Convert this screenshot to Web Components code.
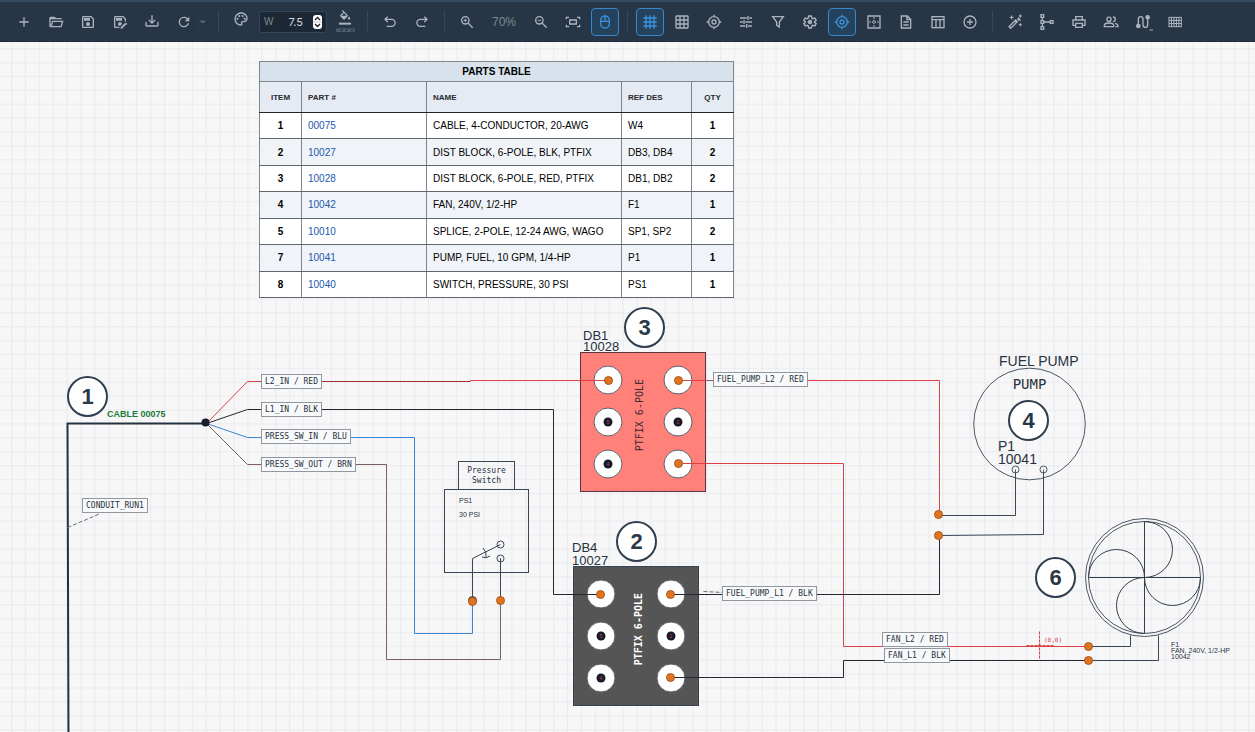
<!DOCTYPE html>
<html lang="en">
<head>
<meta charset="utf-8">
<title>Wiring diagram editor</title>
<style>
  html, body { height: 100%; margin: 0; }
  body { font-family: "Liberation Sans", Arial, sans-serif; background: #f7f7f8; overflow: hidden; }
</style>
</head>
<body>
<diagram-app></diagram-app>

<template id="diagram-app">
  <style>
    :host { display: flex; flex-direction: column; height: 100%; }
  </style>
  <app-toolbar></app-toolbar>
  <diagram-canvas></diagram-canvas>
</template>

<template id="app-toolbar">
  <style>
    :host { display: block; flex: none; }
    nav { display: flex; align-items: center; gap: 4px; height: 39px; padding-left: 10px;
      background: #263646; border-top: 2px solid #34495e; border-bottom: 1px solid #1d2a38; }
    .split { display: flex; align-items: center; }
    .zoom { width: 38px; text-align: center; font-size: 12px; line-height: 16px; color: #7f8a92; }
  </style>
  <nav aria-label="Tools">
    <tool-button icon="plus" label="New"></tool-button>
    <tool-button icon="folder" label="Open"></tool-button>
    <tool-button icon="save" label="Save"></tool-button>
    <tool-button icon="saveEdit" label="Save as"></tool-button>
    <tool-button icon="download" label="Download"></tool-button>
    <div class="split">
      <tool-button icon="refresh" label="Reload"></tool-button>
      <tool-button narrow icon="caret" label="Reload options"></tool-button>
    </div>
    <tool-divider></tool-divider>
    <tool-button raised icon="palette" label="Line colour"></tool-button>
    <width-field></width-field>
    <tool-button icon="fill" label="Fill colour"></tool-button>
    <tool-divider></tool-divider>
    <tool-button icon="undo" label="Undo"></tool-button>
    <tool-button icon="redo" label="Redo"></tool-button>
    <tool-divider></tool-divider>
    <tool-button icon="zoomIn" label="Zoom in"></tool-button>
    <span class="zoom">70%</span>
    <tool-button icon="zoomOut" label="Zoom out"></tool-button>
    <tool-button icon="fit" label="Fit to screen"></tool-button>
    <tool-button active icon="mouse" label="Mouse wheel zoom"></tool-button>
    <tool-divider></tool-divider>
    <tool-button active icon="grid" label="Show grid"></tool-button>
    <tool-button icon="table3" label="Snap to grid"></tool-button>
    <tool-button icon="target" label="Centre view"></tool-button>
    <tool-button icon="tune" label="Options"></tool-button>
    <tool-button icon="filter" label="Filter"></tool-button>
    <tool-button icon="cog" label="Settings"></tool-button>
    <tool-button active icon="target" label="Show origin"></tool-button>
    <tool-button icon="borderIn" label="Page borders"></tool-button>
    <tool-button icon="file" label="Notes"></tool-button>
    <tool-button icon="layout" label="Parts table"></tool-button>
    <tool-button icon="plusCircle" label="Add balloon"></tool-button>
    <tool-divider></tool-divider>
    <tool-button icon="wand" label="Auto arrange"></tool-button>
    <tool-button icon="tree" label="Hierarchy"></tool-button>
    <tool-button icon="printer" label="Print"></tool-button>
    <tool-button icon="people" label="Share"></tool-button>
    <tool-button icon="route" label="Routing"></tool-button>
    <tool-button icon="table5" label="Pin table"></tool-button>
  </nav>
</template>

<template id="tool-divider">
  <style>:host { display: block; width: 1px; height: 22px; margin: 0 4px; background: #364758; }</style>
</template>

<template id="tool-button">
  <style>
    :host { display: block; }
    button { display: flex; align-items: center; justify-content: center; box-sizing: border-box; width: 28px; height: 28px;
      padding: 0; border: 1px solid transparent; border-radius: 4px; background: none; color: #acb3c0; }
    svg { display: block; flex: none; width: 16px; height: 16px; overflow: visible; fill: none; stroke: currentColor; stroke-width: 2; }
    :host([active]) button { color: #3d92da; background: #24425c; border-color: #3a86c6; }
    :host([narrow]) button { width: 12px; color: #5f6e7d; border-left-color: #2b3b4b; border-radius: 0; height: 22px; }
    :host([raised]) button { align-items: flex-start; padding-top: 2px; }
  </style>
  <button type="button"><svg viewBox="0 0 24 24" aria-hidden="true"></svg></button>
</template>

<template id="width-field">
  <style>
    :host { display: block; }
    div { display: flex; align-items: center; box-sizing: border-box; width: 68px; height: 22px; padding: 0 4px;
      background: #1c2835; border: 1px solid #34475a; border-radius: 3px; }
    label { font-size: 10px; color: #7f8a92; }
    input { flex: 1; min-width: 0; margin: 0; padding: 0 10px 0 0; border: 0; background: none; color: #d3d9df; text-align: right;
      font: 11px Inter, sans-serif; appearance: textfield; outline: none; }
    input::-webkit-inner-spin-button { display: none; }
    svg { display: block; width: 9px; height: 14px; }
  </style>
  <div>
    <label for="w">W</label>
    <input id="w" type="number" step="0.5" value="7.5">
    <svg viewBox="0 0 9 14" aria-hidden="true"><rect width="9" height="14" rx="3" fill="#fff"/><path d="M0 7H9" stroke="#c8c8c8"/><path d="M2 5L4.500 2.500L7 5M2 9L4.500 11.500L7 9" fill="none" stroke="#222" stroke-width="1.400"/></svg>
  </div>
</template>

<template id="diagram-canvas">
  <style>
    :host { display: block; position: relative; flex: 1; min-height: 0; overflow: hidden; }
    .world { position: absolute; left: 0; top: -42px; width: 100%; height: calc(100% + 42px); }
    .world > * { position: absolute; }
    .world > svg { left: 0; top: 0; width: 100%; height: 100%; }
    svg { fill: none; }
    .k { stroke: #23282e; } .r { stroke: #dd4145; } .b { stroke: #3a86d2; } .n { stroke: #7d5f5b; } .s { stroke: #3a4654; }
    .dash { stroke: #666d75; stroke-dasharray: 4 2; }
  </style>
  <div class="world">
    <svg aria-hidden="true">
      <defs>
        <pattern id="grid" width="20" height="20" patternUnits="userSpaceOnUse" patternTransform="translate(11 48) scale(0.695)">
          <path d="M0 1H20M1 0V20" stroke="#e9eaef" stroke-width="1.500"/>
        </pattern>
      </defs>
      <rect width="100%" height="100%" fill="url(#grid)"/>
    </svg>

    <parts-table style="left:259px;top:61px"></parts-table>

    <pressure-switch style="left:444px;top:461px"></pressure-switch>
    <fuel-pump style="left:973px;top:354px"></fuel-pump>
    <fan-symbol style="left:1084px;top:517px"></fan-symbol>
    <dist-block colour="#ff8179" edge="#5c3540" ink="#3a2a33" style="left:580px;top:352px"></dist-block>
    <dist-block colour="#555555" edge="#344252" ink="#ffffff" heavy style="left:573px;top:566px"></dist-block>

    <svg aria-hidden="true">
      <g transform="translate(0.5 0.5)">
        <path d="M68 740L67 423H206" stroke="#233240" stroke-width="2"/>
        <path class="r" d="M206 423L247 381H470V380H608M678 380H939V515M678 463H843V646H1089"/>
        <path d="M322 381H470" stroke="#8d2f35" stroke-dasharray="3 1"/>
        <path class="k" d="M206 423L247 409H553V594H601M670 594H939V535M670 677H843V660H1089"/>
        <path class="b" d="M206 423L247 437H414V633H472V601"/>
        <path class="n" d="M206 423L247 464H386V659H500V601"/>
        <path class="s" d="M939 515H1015V473M939 535L1043 534V473M1089 646H1130V635M1089 660H1158V635"/>
        <path class="dash" d="M67 527L100 513M703 591L722 592M707 380H713"/>
        <circle cx="205" cy="422" r="4" fill="#171d2b"/>
        <g stroke="#dd4145"><path stroke-dasharray="3 1" d="M1039 631V658M1026 645H1053"/><circle cx="1039" cy="645" r="1" fill="#dd4145"/></g>
        <circle cx="472" cy="600" r="4" fill="#555" stroke="#444"/>
        <g fill="#e1741f" stroke="#a95722">
          <circle cx="608" cy="380" r="4"/><circle cx="678" cy="380" r="4"/><circle cx="678" cy="463" r="4"/>
          <circle cx="600" cy="594" r="4"/><circle cx="670" cy="594" r="4"/><circle cx="670" cy="677" r="4"/>
          <circle cx="472" cy="601" r="4"/><circle cx="500" cy="600" r="4"/>
          <circle cx="938" cy="514" r="4"/><circle cx="938" cy="535" r="4"/>
          <circle cx="1088" cy="646" r="4"/><circle cx="1088" cy="660" r="4"/>
        </g>
      </g>
    </svg>

    <wire-label style="left:261px;top:374px">L2_IN / RED</wire-label>
    <wire-label style="left:261px;top:402px">L1_IN / BLK</wire-label>
    <wire-label style="left:261px;top:429px">PRESS_SW_IN / BLU</wire-label>
    <wire-label style="left:261px;top:457px">PRESS_SW_OUT / BRN</wire-label>
    <wire-label style="left:82px;top:498px">CONDUIT_RUN1</wire-label>
    <wire-label style="left:713px;top:372px">FUEL_PUMP_L2 / RED</wire-label>
    <wire-label style="left:722px;top:586px">FUEL_PUMP_L1 / BLK</wire-label>
    <wire-label style="left:882px;top:632px">FAN_L2 / RED</wire-label>
    <wire-label style="left:884px;top:648px">FAN_L1 / BLK</wire-label>

    <note-text style="left:107px;top:408px;--size:9px;--line:12px;--ink:#1c7a38;--weight:700">CABLE 00075</note-text>
    <note-text style="left:583px;top:330px;--line:11px">DB1<br>10028</note-text>
    <note-text style="left:572px;top:541px">DB4<br>10027</note-text>
    <note-text style="left:999px;top:354px;--size:14px;--line:14px">FUEL PUMP</note-text>
    <note-text style="left:998px;top:440px;--size:14px;--line:13px">P1<br>10041</note-text>
    <note-text style="left:1171px;top:642px;--size:7px;--line:6px">F1<br>FAN, 240V, 1/2-HP<br>10042</note-text>
    <note-text style="left:1044px;top:636px;--size:6px;--line:8px;--ink:#dd4145;--face:'DejaVu Sans Mono',monospace">(0,0)</note-text>

    <item-balloon style="left:67px;top:376px">1</item-balloon>
    <item-balloon style="left:624px;top:307px">3</item-balloon>
    <item-balloon style="left:616px;top:521px">2</item-balloon>
    <item-balloon style="left:1008px;top:400px">4</item-balloon>
    <item-balloon style="left:1035px;top:557px">6</item-balloon>
  </div>
</template>

<template id="parts-table">
  <style>
    :host { display: block; }
    table { border-collapse: collapse; table-layout: fixed; width: 474px; height: 237px; font-size: 10px; color: #000; background: #fff; }
    caption, th, td { box-sizing: border-box; }
    th, td { padding: 0 6px; border: 1px solid #80868d; text-align: left; }
    thead tr:first-child th { height: 20px; background: #d8e2ec; text-align: center; }
    thead tr + tr th { height: 31px; background: #e6eaf2; font-size: 8px; color: #252a30; border-bottom-color: #22262b; }
    tbody tr:nth-child(even) { background: #f0f4f8; }
    tbody td, tbody th { border-bottom-color: #60666d; }
    .c { text-align: center; font-weight: 700; }
    a { color: #2158ae; text-decoration: none; }
  </style>
  <table>
    <colgroup><col style="width:42px"><col style="width:125px"><col style="width:195px"><col style="width:70px"><col style="width:42px"></colgroup>
    <thead>
      <tr><th colspan="5" scope="colgroup">PARTS TABLE</th></tr>
      <tr><th class="c" scope="col">ITEM</th><th scope="col">PART #</th><th scope="col">NAME</th><th scope="col">REF DES</th><th class="c" scope="col">QTY</th></tr>
    </thead>
    <tbody></tbody>
  </table>
</template>

<template id="wire-label">
  <style>
    :host { display: block; box-sizing: border-box; padding: 0 3px; border: 1px solid #90979f; background: #f8f9fb;
      font: 8px/13px "DejaVu Sans Mono", monospace; color: #27323e; white-space: nowrap; }
  </style>
  <slot></slot>
</template>

<template id="note-text">
  <style>
    :host { display: block; font-family: var(--face, "Liberation Sans", Arial, sans-serif); font-size: var(--size, 13px);
      line-height: var(--line, 13px); font-weight: var(--weight, 400); color: var(--ink, #27323e); white-space: nowrap; }
  </style>
  <slot></slot>
</template>

<template id="item-balloon">
  <style>
    :host { display: flex; align-items: center; justify-content: center; box-sizing: border-box; width: 41px; height: 41px;
      border: 2px solid #2f3e4e; border-radius: 50%; background: #fff; color: #2a3746; font-size: 22px; line-height: 24px; font-weight: 700; }
  </style>
  <slot></slot>
</template>

<template id="dist-block">
  <style>
    :host { display: flex; align-items: center; justify-content: space-between; box-sizing: border-box; padding: 0 12px;
      width: 126px; height: 140px; border: 1px solid var(--edge); background: var(--fill); }
    svg { display: block; width: 30px; height: 114px; }
    text { font: 5px "Liberation Sans", sans-serif; fill: #d0404a; text-anchor: middle; }
    span { writing-mode: vertical-rl; transform: rotate(180deg); margin: 0 6px 14px 0; font: 10px/12px "DejaVu Sans Mono", monospace; color: var(--ink); }
    :host([heavy]) span { margin: 0 0 14px 6px; font-weight: 700; }
  </style>
  <svg class="left" viewBox="0 0 30 114"></svg>
  <span>PTFIX 6-POLE</span>
  <svg class="right" viewBox="0 0 30 114"></svg>
</template>

<template id="pressure-switch">
  <style>
    :host { display: flex; flex-direction: column; align-items: center; width: 85px; color: #27323e; }
    .cap { box-sizing: border-box; width: 57px; height: 29px; padding-top: 4px; border: 1px solid #3a4654; text-align: center;
      font: 8px/10px "DejaVu Sans Mono", monospace; }
    .body { box-sizing: border-box; width: 85px; height: 84px; margin-top: -1px; padding: 4px 14px; border: 1px solid #3a4654;
      font-size: 7px; line-height: 14px; }
    svg { display: block; width: 36px; height: 68px; margin-left: 10px; margin-top: 16px; fill: none; stroke: #3a4654; overflow: visible; }
  </style>
  <div class="cap">Pressure<br>Switch</div>
  <div class="body">PS1<br>30 PSI
    <svg viewBox="0 0 36 68" aria-hidden="true">
      <path d="M3.500 62V20.500L31.500 6.500M31.500 20V62M14 10Q18 14 17 19M13 19Q17 21 21 18"/>
      <circle cx="31.500" cy="6.500" r="3.500"/><circle cx="31.500" cy="20.500" r="3.500"/>
    </svg>
  </div>
</template>

<template id="fuel-pump">
  <style>
    :host { display: grid; width: 113px; }
    svg, span { grid-area: 1 / 1; }
    svg { display: block; width: 113px; height: 127px; fill: none; stroke: #4c5763; }
    span { padding-top: 21px; text-align: center; font: 14px/18px "DejaVu Sans Mono", monospace; color: #27323e; }
  </style>
  <svg viewBox="0 0 113 127" aria-hidden="true">
    <circle cx="56.500" cy="70" r="55.800"/><path d="M42.500 115.500V122M70.500 115.500V122"/>
    <circle cx="42.500" cy="115.500" r="3.500"/><circle cx="70.500" cy="115.500" r="3.500"/>
  </svg>
  <span>PUMP</span>
</template>

<template id="fan-symbol">
  <style>
    :host { display: block; }
    svg { display: block; width: 121px; height: 121px; fill: none; stroke: #4c5763; }
  </style>
  <svg viewBox="0 0 121 121" aria-hidden="true">
    <circle cx="60.500" cy="60.500" r="59"/><circle cx="60.500" cy="60.500" r="56"/>
    <path stroke="#34404d" d="M60.500 4.500V116.500M4.500 60.500H116.500M60.500 4.500a28 28 0 0 1 0 56a28 28 0 0 0 0 56M4.500 60.500a28 28 0 0 1 56 0a28 28 0 0 0 56 0"/>
  </svg>
</template>

<script>
const solid = d => `<path fill="currentColor" stroke="none" d="${d}"/>`;
const line = d => `<path d="${d}"/>`;
const lens = '<circle cx="9.500" cy="9.500" r="5.500"/><path d="M14 14L20.500 20.500"/>';

const ICONS = {
  plus: line('M12 5V19M5 12H19'),
  folder: solid('M6.1,10L4,18V8H21A2,2 0 0,0 19,6H12L10,4H4A2,2 0 0,0 2,6V18A2,2 0 0,0 4,20H19C19.9,20 20.7,19.4 20.9,18.5L23.2,10H6.1M19,18H6L7.6,12H20.6L19,18Z'),
  save: solid('M17 3H5C3.89 3 3 3.9 3 5V19C3 20.1 3.89 21 5 21H19C20.1 21 21 20.1 21 19V7L17 3M19 19H5V5H16.17L19 7.83V19M12 12C10.34 12 9 13.34 9 15S10.34 18 12 18 15 16.66 15 15 13.66 12 12 12M6 6H15V10H6V6Z'),
  saveEdit: solid('M11 19H5V5H16.17L19 7.83V11.5L21 11.2V7L17 3H5C3.89 3 3 3.9 3 5V19C3 20.1 3.89 21 5 21H11V19M6 6V10H15V6H6M12 12C10.34 12 9 13.34 9 15S10.34 18 12 18L15 15C15 13.34 13.66 12 12 12M19.07 13.88L13 19.94V22H15.06L21.12 15.93L19.07 13.88M22.7 14.58L21.42 13.3C21.2 13.1 20.9 13.1 20.65 13.3L19.65 14.3L21.7 16.3L22.7 15.3C22.89 15.1 22.89 14.78 22.7 14.58Z'),
  download: solid('M2 12H4V17H20V12H22V17C22 18.11 21.11 19 20 19H4C2.9 19 2 18.11 2 17V12M12 15L17.55 9.54L16.13 8.13L13 11.25V2H11V11.25L7.88 8.13L6.46 9.55L12 15Z'),
  refresh: solid('M17.65,6.35C16.2,4.9 14.21,4 12,4A8,8 0 0,0 4,12A8,8 0 0,0 12,20C15.73,20 18.84,17.45 19.73,14H17.65C16.83,16.33 14.61,18 12,18A6,6 0 0,1 6,12A6,6 0 0,1 12,6C13.66,6 15.14,6.69 16.22,7.78L13,11H20V4L17.65,6.35Z'),
  caret: solid('M5,10L10,14L15,10H5Z'),
  palette: solid('M12,22A10,10 0 0,1 2,12A10,10 0 0,1 12,2C17.5,2 22,6 22,11A6,6 0 0,1 16,17H14.2C13.9,17 13.7,17.2 13.7,17.5C13.7,17.6 13.8,17.7 13.8,17.8C14.2,18.3 14.4,18.9 14.4,19.5C14.5,20.9 13.4,22 12,22M12,4A8,8 0 0,0 4,12A8,8 0 0,0 12,20C12.3,20 12.5,19.8 12.5,19.5C12.5,19.3 12.4,19.2 12.4,19.1C12,18.6 11.8,18.1 11.8,17.5C11.8,16.1 12.9,15 14.3,15H16A4,4 0 0,0 20,11C20,7.1 16.4,4 12,4M6.500,10a1.500,1.500 0 1,0 0.010,0zM9.500,6a1.500,1.500 0 1,0 0.010,0zM14.500,6a1.500,1.500 0 1,0 0.010,0zM17.500,10a1.500,1.500 0 1,0 0.010,0z'),
  fill: '<g transform="translate(2 -6) scale(0.850)">' + solid('M19,11.5C19,11.5 17,13.67 17,15A2,2 0 0,0 19,17A2,2 0 0,0 21,15C21,13.67 19,11.5 19,11.5M5.21,10L10,5.21L14.79,10M16.56,8.94L7.62,0L6.21,1.41L8.59,3.79L3.44,8.94C2.85,9.5 2.85,10.47 3.44,11.06L8.94,16.56C9.23,16.85 9.62,17 10,17C10.38,17 10.77,16.85 11.06,16.56L16.56,11.06C17.15,10.47 17.15,9.5 16.56,8.94Z') + '</g><path d="M3 14.500H21" stroke-width="3"/><path d="M-1 22.500H26V26H-1Z" stroke="#5f6d7b" stroke-width="1.200"/><path d="M1 26L4 23M9 26L12 23M17 26L20 23" stroke="#5f6d7b"/>',
  undo: line('M8.500 4L4.500 8L8.500 12M5 8H14.500A5 5 0 0 1 14.500 18.500H7'),
  redo: line('M15.500 4L19.500 8L15.500 12M19 8H9.500A5 5 0 0 0 9.500 18.500H17'),
  zoomIn: lens + '<path d="M9.500 7V12M7 9.500H12" stroke-width="1.500"/>',
  zoomOut: lens + '<path d="M7 9.500H12" stroke-width="1.500"/>',
  fit: line('M2 8V5H6M18 5H22V8M22 16V19H18M6 19H2V16M7 9H17V15H7Z'),
  mouse: '<rect x="5.500" y="3" width="13" height="18" rx="6.500"/>' + line('M12 3V11M5.500 11H18.500'),
  grid: line('M6 2V22M12 2V22M18 2V22M2 6H22M2 12H22M2 18H22'),
  table3: '<rect x="3" y="3" width="18" height="18" rx="1"/>' + line('M9 3V21M15 3V21M3 9H21M3 15H21'),
  target: '<circle cx="12" cy="12" r="8"/><circle cx="12" cy="12" r="3"/>' + line('M12 1V4M12 20V23M1 12H4M20 12H23'),
  tune: line('M3 6H13M17 6H21M15 3V9M3 12H7M11 12H21M9 9V15M3 18H11M15 18H21M13 15V21'),
  filter: line('M4 4H20L14 12V19.500L10 17V12Z'),
  cog: '<circle cx="12" cy="12" r="3" fill="currentColor" stroke-width="1"/><path d="M10 3H14L14.600 6L16.500 7L19.300 6L21.300 9.500L19 11.500V12.500L21.300 14.500L19.300 18L16.500 17L14.600 18L14 21H10L9.400 18L7.500 17L4.700 18L2.700 14.500L5 12.500V11.500L2.700 9.500L4.700 6L7.500 7L9.400 6Z"/>',
  borderIn: '<path d="M3 3H21V21H3Z"/><path d="M12 5V19M5 12H19" stroke-dasharray="2 2"/>',
  file: line('M5 3H14L19 8V21H5ZM8 12H16M8 16.500H16M13.500 3V8.500H19'),
  layout: '<rect x="3" y="4" width="18" height="16.500"/>' + line('M3 8.500H21M9 8V20M15 8V20'),
  plusCircle: '<circle cx="12" cy="12" r="9"/>' + line('M12 7.500V16.500M7.500 12H16.500'),
  wand: line('M3 19L13 9L15.500 11.500L5.500 21.500ZM12 10.500L14 12.500') + solid('M15 7L18 5L21 10L17 10ZM7 1L8 4L11 5L8 6L7 9L6 6L3 5L6 4ZM20 0L21 2L23 3L21 4L20 6L19 4L17 3L19 2ZM20 13L21 15L23 16L21 17L20 19L19 17L17 16L19 15Z'),
  tree: line('M3 1H7V5H3ZM3 10H7V14H3ZM3 19H7V23H3ZM17 10H21V14H17ZM5 5V10M5 14V19M7 12H17'),
  printer: line('M7 8V4H17V8M6 17H3V9H21V17H18M7 14H17V20H7Z'),
  people: '<circle cx="9" cy="8" r="3.200"/><path d="M2 19V17C2 14.500 6 13.500 9 13.500S16 14.500 16 17V19ZM15 4.500A3.500 3.500 0 0 1 15 11.500M18 14Q22.500 15 22.500 18V19H18.500"/>',
  route: '<path d="M5 16V8Q5 4 8.500 4T12 8V16Q12 20 15.500 20T19 16V8"/><circle cx="5" cy="18" r="2.500" fill="currentColor"/><circle cx="19" cy="5" r="2.500" fill="currentColor"/><path d="M22 24H27" stroke-width="1.500"/>',
  table5: '<g stroke-width="1.500"><rect x="3" y="5" width="18.500" height="14"/><path d="M6.700 5V19M10.400 5V19M14.100 5V19M17.800 5V19M3 9.700H21.500M3 14.300H21.500"/></g>'
};

const PARTS = [
  ['1', '00075', 'CABLE, 4-CONDUCTOR, 20-AWG', 'W4', '1'],
  ['2', '10027', 'DIST BLOCK, 6-POLE, BLK, PTFIX', 'DB3, DB4', '2'],
  ['3', '10028', 'DIST BLOCK, 6-POLE, RED, PTFIX', 'DB1, DB2', '2'],
  ['4', '10042', 'FAN, 240V, 1/2-HP', 'F1', '1'],
  ['5', '10010', 'SPLICE, 2-POLE, 12-24 AWG, WAGO', 'SP1, SP2', '2'],
  ['7', '10041', 'PUMP, FUEL, 10 GPM, 1/4-HP', 'P1', '1'],
  ['8', '10040', 'SWITCH, PRESSURE, 30 PSI', 'PS1', '1']
];

class TemplateElement extends HTMLElement {
  constructor() {
    super();
    this.attachShadow({ mode: 'open' })
      .append(document.getElementById(this.localName).content.cloneNode(true));
  }
}

class ToolButton extends TemplateElement {
  connectedCallback() {
    const button = this.shadowRoot.querySelector('button');
    button.setAttribute('aria-label', this.getAttribute('label'));
    if (this.hasAttribute('active')) button.setAttribute('aria-pressed', 'true');
    button.firstElementChild.innerHTML = ICONS[this.getAttribute('icon')];
  }
}

class PartsTable extends TemplateElement {
  connectedCallback() {
    this.shadowRoot.querySelector('tbody').innerHTML = PARTS.map(([item, part, name, ref, qty]) =>
      `<tr><th class="c" scope="row">${item}</th><td><a href="#${part}">${part}</a></td><td>${name}</td><td>${ref}</td><td class="c">${qty}</td></tr>`
    ).join('');
  }
}

class DistBlock extends TemplateElement {
  connectedCallback() {
    this.style.setProperty('--fill', this.getAttribute('colour'));
    this.style.setProperty('--edge', this.getAttribute('edge'));
    this.style.setProperty('--ink', this.getAttribute('ink'));
    const pole = (y, number) => `<circle cx="15" cy="${y}" r="14" fill="#fff" stroke="#5a5f69"/>` +
      (number ? `<circle cx="15" cy="${y}" r="4.500" fill="#161b29"/><text x="15" y="${y + 2}">${number}</text>` : '');
    this.shadowRoot.querySelector('.left').innerHTML = pole(15) + pole(57, 5) + pole(99, 4);
    this.shadowRoot.querySelector('.right').innerHTML = pole(15) + pole(57, 2) + pole(99);
  }
}

customElements.define('tool-button', ToolButton);
customElements.define('parts-table', PartsTable);
customElements.define('dist-block', DistBlock);
for (const name of ['tool-divider', 'width-field', 'wire-label', 'note-text', 'item-balloon', 'pressure-switch',
  'fuel-pump', 'fan-symbol', 'app-toolbar', 'diagram-canvas', 'diagram-app']) {
  customElements.define(name, class extends TemplateElement {});
}
</script>
</body>
</html>
